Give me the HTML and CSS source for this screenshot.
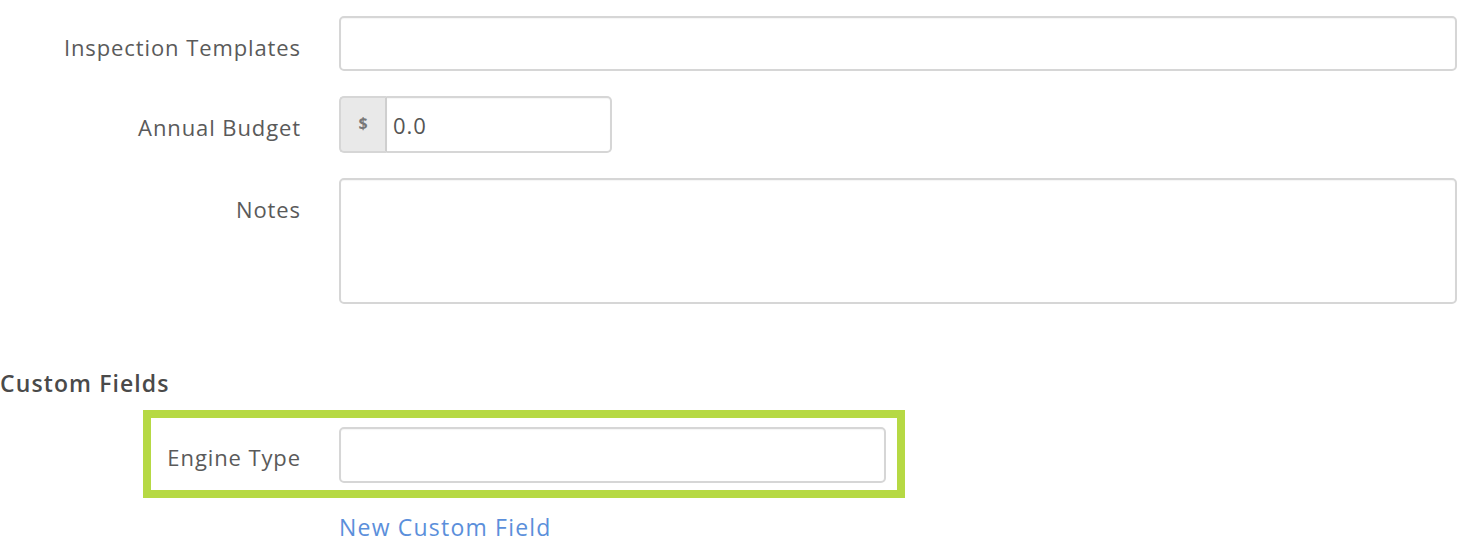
FILE: index.html
```html
<!DOCTYPE html>
<html>
<head>
<meta charset="utf-8">
<link rel="stylesheet" href="styles.css">
</head>
<body>
<form class="form">
  <div class="row">
    <label class="label">Inspection Templates</label>
    <div class="control"><input class="input" type="text"></div>
  </div>
  <div class="row">
    <label class="label">Annual Budget</label>
    <div class="control">
      <div class="group">
        <span class="addon">$</span>
        <input class="input group-input" type="text" value="0.0">
      </div>
    </div>
  </div>
  <div class="row">
    <label class="label">Notes</label>
    <div class="control"><textarea class="input textarea"></textarea></div>
  </div>

  <h3 class="heading">Custom Fields</h3>

  <div class="highlight">
    <label class="label label-sm">Engine Type</label>
    <input class="input engine" type="text">
  </div>

  <div class="link-row">
    <a class="link" href="#">New Custom Field</a>
  </div>
</form>
</body>
</html>
```

FILE: styles.css
```css
* { box-sizing: border-box; }
html, body { margin: 0; padding: 0; background: #fff; }
body {
  font-family: "Open Sans", "Noto Sans", sans-serif;
  color: #555;
  overflow: hidden;
  height: 538px;
}
.form { padding-top: 16px; padding-right: 7px; }
.row {
  display: flex;
  align-items: flex-start;
  gap: 38px;
  margin-bottom: 25px;
}
.label {
  width: 301px;
  flex: none;
  text-align: right;
  font-size: 22px;
  letter-spacing: 0.9px;
  line-height: 30px;
  padding-top: 16px;
  color: #5a5a5a;
}
.label-sm { width: 150px; }
.control { flex: 1; }
.input {
  display: block;
  width: 100%;
  height: 55px;
  border: 2px solid #d6d6d6;
  border-radius: 5px;
  background: #fff;
  font-family: inherit;
  font-size: 22px;
  letter-spacing: 0.9px;
  color: #555;
  padding: 0 6px;
  outline: none;
  box-shadow: inset 0 1px 1px rgba(0,0,0,0.04);
}
.group {
  display: flex;
  width: 273px;
  height: 57px;
}
.addon {
  width: 48px;
  flex: none;
  display: flex;
  align-items: center;
  justify-content: center;
  background: #e9e9e9;
  border: 2px solid #d6d6d6;
  border-right: 2px solid #cfcfcf;
  border-radius: 5px 0 0 5px;
  font-size: 16px;
  font-weight: 700;
  color: #777;
  padding-bottom: 4px;
}
.group-input {
  height: 57px;
  border-left: none;
  border-radius: 0 5px 5px 0;
  padding-left: 6px;
}
.textarea {
  height: 126px;
  resize: none;
}
.row:nth-child(3) { margin-bottom: 0; }
.heading {
  margin: 64px 0 0;
  font-size: 23px;
  letter-spacing: 1.1px;
  line-height: 30px;
  font-weight: 600;
  color: #4a4a4a;
}
.highlight {
  display: flex;
  align-items: flex-start;
  gap: 38px;
  width: 762px;
  height: 88px;
  margin-left: 143px;
  margin-top: 12px;
  border: 8px solid #b6d944;
  padding: 9px 11px 0 0;
}
.highlight .label { padding-top: 15px; }
.engine { width: 547px; flex: none; height: 56px; }
.link-row { padding-left: 339px; padding-top: 19px; line-height: 20px; }
.link {
  color: #5b8fdb;
  text-decoration: none;
  font-size: 23px;
  letter-spacing: 1.2px;
  line-height: 20px;
}
```
